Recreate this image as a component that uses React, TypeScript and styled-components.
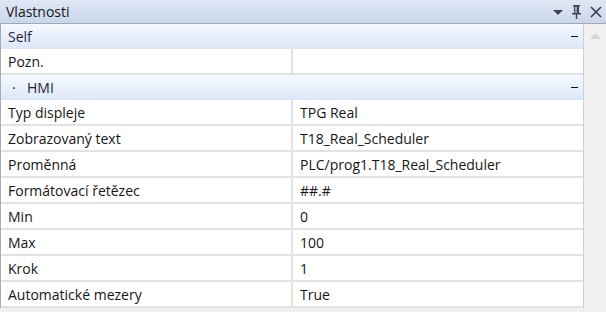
import * as React from 'react';
import styled, { createGlobalStyle } from 'styled-components';

const GlobalStyle = createGlobalStyle`
  html, body { margin: 0; padding: 0; background: #f0f0f0; }
  body { font-family: "Open Sans", "Noto Sans", sans-serif; font-size: 14px; color: #161616; }
`;

const Panel = styled.div`
  width: 606px;
  height: 312px;
  display: flex;
  flex-direction: column;
  background: #f0f0f0;
  overflow: hidden;
`;

const TitleBar = styled.div`
  height: 23px;
  flex: none;
  display: flex;
  align-items: center;
  justify-content: space-between;
  padding: 0 3px 0 6px;
  background: linear-gradient(#dfe7f4, #c9d6eb);
  border-bottom: 1px solid #9fa9b6;
`;

const Title = styled.span`
  font-size: 14px;
  color: #161616;
`;

const Tools = styled.div`
  display: flex;
  align-items: center;
  gap: 7px;
  color: #3c4450;
`;

const Body = styled.div`
  flex: 1;
  display: flex;
  min-height: 0;
`;

const Grid = styled.div`
  width: 582px;
  flex: none;
  border-left: 1px solid #a8acb2;
  border-right: 1px solid #cfcfcf;
  display: flex;
  flex-direction: column;
  align-self: flex-start;
  background: #f0f0f0;
`;

const Category = styled.div`
  height: 25px;
  display: flex;
  align-items: center;
  justify-content: space-between;
  padding: 0 5px 0 7px;
  background: linear-gradient(#f6f9fe, #dbe7f8);
  color: #1b1e3c;
`;

const CatLabel = styled.span<{ $bullet?: boolean }>`
  padding-left: ${p => (p.$bullet ? '4px' : '0')};
`;

const Bullet = styled.span`
  display: inline-block;
  width: 15px;
`;

const Collapse = styled.span`
  width: 7px;
  height: 1px;
  background: #111;
`;

const Row = styled.div`
  height: 24px;
  display: grid;
  grid-template-columns: 290px 2px 1fr;
  background: #fff;
  border-bottom: 2px solid #e2e2e2;
`;

const Cell = styled.div`
  display: flex;
  align-items: center;
  padding-left: 7px;
  white-space: nowrap;
  padding-top: 1px;
`;

const Divider = styled.div`
  background: #e2e2e2;
`;

const Scroll = styled.div`
  flex: 1;
  display: flex;
  justify-content: center;
  padding-top: 9px;
`;

const props: [string, string][] = [
  ['Typ displeje', 'TPG Real'],
  ['Zobrazovaný text', 'T18_Real_Scheduler'],
  ['Proměnná', 'PLC/prog1.T18_Real_Scheduler'],
  ['Formátovací řetězec', '##.#'],
  ['Min', '0'],
  ['Max', '100'],
  ['Krok', '1'],
  ['Automatické mezery', 'True'],
];

export default function App() {
  return (
    <Panel>
      <GlobalStyle />
      <TitleBar>
        <Title>Vlastnosti</Title>
        <Tools>
          <svg width="12" height="12" viewBox="0 0 12 12">
            <path d="M1 4h10L6 9z" fill="currentColor" />
          </svg>
          <svg width="11" height="16" viewBox="0 0 11 16">
            <path d="M2 1h7v1.5H8V9h2v1.5H6.2V15H4.8v-4.5H1V9h2V2.5H2z M4.4 2.5V9h1.2V2.5z" fill="currentColor" fillRule="evenodd" />
          </svg>
          <svg width="14" height="14" viewBox="0 0 14 14">
            <path d="M2 2l10 10M12 2L2 12" stroke="currentColor" strokeWidth="1.7" />
          </svg>
        </Tools>
      </TitleBar>
      <Body>
        <Grid>
          <Category>
            <CatLabel>Self</CatLabel>
            <Collapse />
          </Category>
          <Row>
            <Cell>Pozn.</Cell>
            <Divider />
            <Cell />
          </Row>
          <Category>
            <CatLabel $bullet>
              <Bullet>·</Bullet>HMI
            </CatLabel>
            <Collapse />
          </Category>
          {props.map(([k, v]) => (
            <Row key={k}>
              <Cell>{k}</Cell>
              <Divider />
              <Cell>{v}</Cell>
            </Row>
          ))}
        </Grid>
        <Scroll>
          <svg width="11" height="6" viewBox="0 0 11 6">
            <path d="M0 6L5.5 0 11 6z" fill="#d6d6d6" />
          </svg>
        </Scroll>
      </Body>
    </Panel>
  );
}
